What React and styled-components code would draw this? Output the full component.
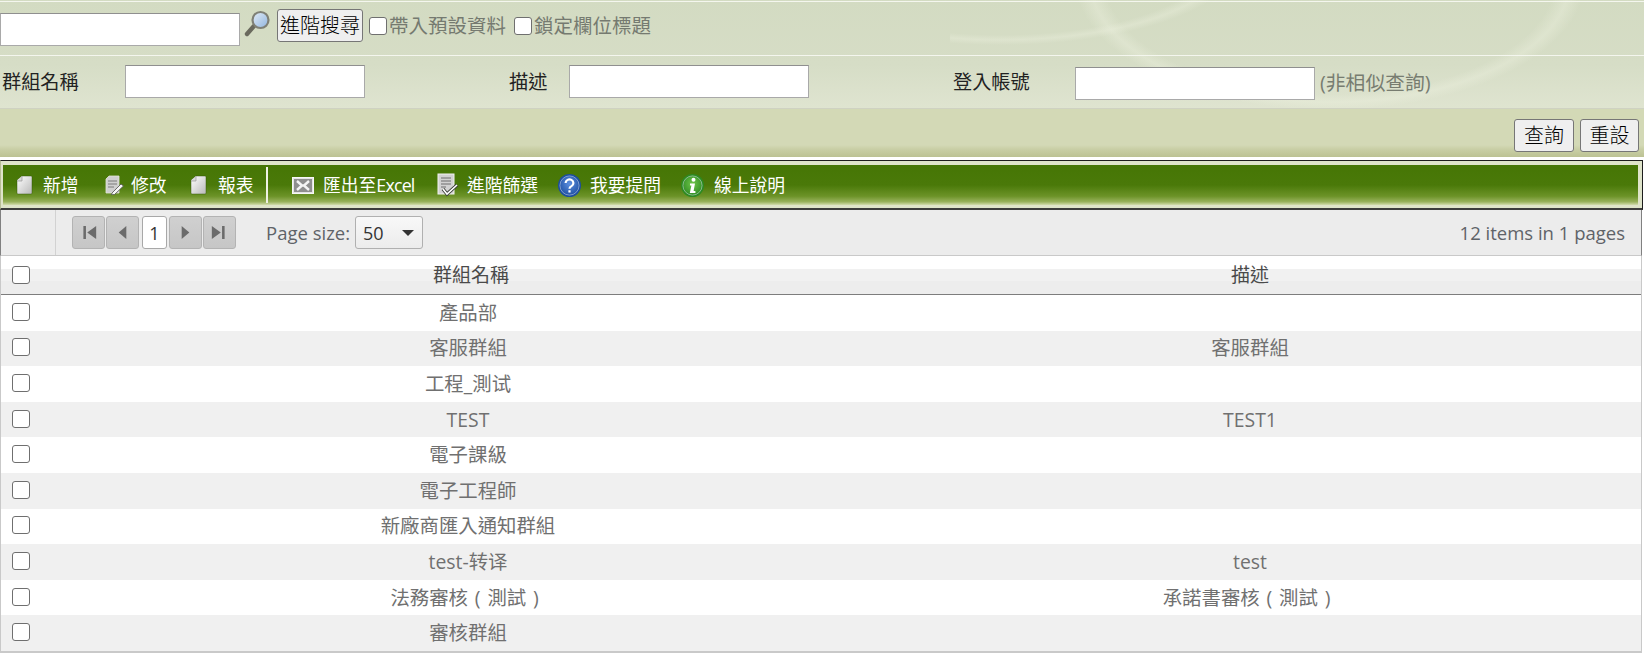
import React from "react";
import styled, { createGlobalStyle } from "styled-components";

const CJK = `"Open Sans", "Noto Sans CJK TC", sans-serif`;

const Global = createGlobalStyle`
  html, body { margin: 0; padding: 0; height: 653px; overflow: hidden; background: #fff; }
  body { font-family: ${CJK}; }
  * { box-sizing: border-box; }
`;

const Page = styled.div`
  width: 1644px;
  height: 653px;
  overflow: hidden;
`;

const SearchPanel = styled.div`
  height: 110px;
  padding-top: 1px;
  background-color: #d5dcc4;
  background-image:
    radial-gradient(ellipse 240px 85px at 50px -40px, transparent 88%, rgba(236,240,222,.38) 94%, transparent 100%),
    radial-gradient(ellipse 255px 130px at 1330px -20px, transparent 88%, rgba(236,240,222,.4) 94%, transparent 100%),
    linear-gradient(180deg, #d3dbc2 0%, #d6ddc6 60%, #dfe4d0 100%);
  background-size: 400px 110px, 100% 100%, 100% 100%;
  background-position: 950px 0, 0 0, 0 0;
  background-repeat: no-repeat;
  border-bottom: 2px solid #cfd2c2;
`;

const SearchRow = styled.div`
  height: 54px;
  border-top: 1px solid #f4f6ee;
  display: flex;
  align-items: flex-start;
`;

const FilterRow = styled.div`
  height: 53px;
  border-top: 1px solid #f4f6ee;
  display: flex;
  align-items: center;
  padding-bottom: 1px;
`;

const TextInput = styled.input`
  width: ${(p) => p.$w || 240}px;
  height: 33px;
  padding: 0;
  border: 1px solid #a9a9a9;
  border-top-color: #8f8f8f;
  background: #fff;
  margin-top: ${(p) => p.$top || 0}px;
  flex: none;
`;

const QuickInput = styled(TextInput)`
  margin-top: 11px;
`;

const SearchIcon = styled.svg`
  width: 27px;
  height: 27px;
  margin: 8px 6px 0 4px;
  flex: none;
`;

const NativeButton = styled.button`
  height: 33px;
  width: ${(p) => p.$w}px;
  padding: 0;
  font: 300 20px/31px ${CJK};
  color: #000;
  background: #efefef;
  border: 1px solid #767676;
  border-radius: 3px;
`;

const AdvancedButton = styled(NativeButton)`
  margin-top: 7px;
`;

const CheckLabel = styled.label`
  display: flex;
  align-items: center;
  margin: 11px ${(p) => p.$mr}px 0 ${(p) => p.$ml}px;
  font-size: 19.5px;
  line-height: 26px;
  color: #757a70;
`;

const Check = styled.input.attrs({ type: "checkbox" })`
  appearance: none;
  width: 18px;
  height: 18px;
  margin: 0;
  flex: none;
  background: #fff;
  border: 1.5px solid #6f6f6f;
  border-radius: 3px;
`;

const TopCheck = styled(Check)`
  margin-right: 2px;
`;

const FieldLabel = styled.span`
  flex: none;
  width: ${(p) => p.$w}px;
  margin-left: ${(p) => p.$ml}px;
  font-size: 19.2px;
  line-height: 26px;
  color: #222;
`;

const Hint = styled.span`
  margin-left: 5px;
  font-size: 19.8px;
  color: #777c70;
`;

const ActionRow = styled.div`
  height: 48px;
  margin-top: -1px;
  padding: 10px 5px 0 0;
  display: flex;
  justify-content: flex-end;
  gap: 6px;
  background: linear-gradient(180deg, #d3d9b6 0, #d3d9b6 36px, #c9cfa6 40px, #bcc293 48px);
`;

const ToolbarFrame = styled.div`
  margin: 3px 1px 0 0;
  height: 50px;
  padding: 4px 4px 3px 2px;
  background: #dfe4ca;
  border: 1px solid #1d1d1d;
  border-left-color: #b7bd96;
  border-bottom: 2px solid #3d3d3d;
`;

const Toolbar = styled.div`
  height: 40px;
  display: flex;
  align-items: center;
  background: linear-gradient(180deg, #467605 0, #4a7909 50%, #6c9328 78%, #98b15c 92%, #d3dcae 100%);
`;

const ToolItem = styled.div`
  display: flex;
  align-items: center;
  flex: none;
  width: ${(p) => p.$w}px;
  padding-left: ${(p) => p.$pl || 0}px;
  font-size: 17.8px;
  line-height: 24px;
  color: #fff;
  white-space: nowrap;
`;

const ToolIcon = styled.svg`
  flex: none;
  width: ${(p) => p.$s}px;
  height: ${(p) => p.$h || p.$s}px;
  margin-right: ${(p) => p.$mr}px;
`;

const ToolDivider = styled.div`
  flex: none;
  width: 2px;
  height: 36px;
  background: #eef1e4;
  margin: 0 24px 0 13px;
`;

const ExcelWord = styled.span`
  letter-spacing: -0.8px;
`;

const Pager = styled.div`
  height: 46px;
  margin-right: 2px;
  display: flex;
  align-items: stretch;
  background: #ececec;
  border-left: 1px solid #808080;
  border-right: 1px solid #808080;
  border-bottom: 1px solid #c9c9c9;
  color: #5f6368;
`;

const PagerLead = styled.div`
  flex: none;
  width: 55px;
  border-right: 1px solid #d2d2d2;
`;

const PagerBody = styled.div`
  flex: 1;
  display: flex;
  align-items: center;
  padding: 0 16px 0 16px;
`;

const PageBtn = styled.div`
  flex: none;
  width: 33px;
  height: 33px;
  margin-right: 1px;
  display: flex;
  align-items: center;
  justify-content: center;
  background: linear-gradient(180deg, #d0d0d0, #c6c6c6);
  border: 1px solid #b3b3b3;
  border-radius: 3px;
`;

const PageCurrent = styled.div`
  flex: none;
  width: 25px;
  height: 33px;
  margin: 0 2px 0 2px;
  display: flex;
  align-items: center;
  justify-content: center;
  background: #fff;
  border: 1px solid #a8a8a8;
  border-radius: 3px;
  font-size: 18px;
  color: #333;
`;

const SizeLabel = styled.span`
  margin-left: 29px;
  font-size: 18.5px;
`;

const SizeSelect = styled.div`
  width: 68px;
  height: 33px;
  margin-left: 5px;
  padding: 0 7px;
  display: flex;
  align-items: center;
  justify-content: space-between;
  background: linear-gradient(180deg, #f8f8f8, #ececec);
  border: 1px solid #b0b0b0;
  border-radius: 3px;
  font-size: 18px;
  color: #333;
`;

const Caret = styled.i`
  width: 0;
  height: 0;
  border-left: 6px solid transparent;
  border-right: 6px solid transparent;
  border-top: 6px solid #333;
  margin-right: 1px;
`;

const Total = styled.span`
  margin-left: auto;
  font-size: 18.5px;
`;

const Grid = styled.div`
  margin-right: 2px;
  border-left: 1px solid #c9c9c9;
  border-right: 1px solid #c9c9c9;
  border-bottom: 2px solid #c9c9c9;
`;

const HeaderRow = styled.div`
  height: 39px;
  display: grid;
  grid-template-columns: 82px 776px 1fr;
  align-items: center;
  background: linear-gradient(180deg, #fff 0, #fff 13px, #f1f1f1 13px, #f1f1f1 25px, #ededed 25px, #ededed 100%);
  border-bottom: 1px solid #7d7d7d;
  color: #4a4a4a;
  font-size: 19px;
`;

const DataRow = styled.div`
  height: 35.6px;
  display: grid;
  grid-template-columns: 76px 782px 1fr;
  align-items: center;
  background: ${(p) => (p.$alt ? "#f0f0f0" : "#fff")};
  color: #707070;
  font-size: 19.4px;
`;

const CheckCell = styled.div`
  display: flex;
  padding: 0 0 ${(p) => (p.$head ? 0 : 2)}px 11px;
`;

const Cell = styled.div`
  text-align: center;
  line-height: 26px;
`;

const Paren = styled.span`
  display: inline-block;
  width: 1em;
  text-align: center;
`;

const DocIcon = ({ mr }) => (
  <ToolIcon $s={17} $h={20} $mr={mr} viewBox="0 0 17 20">
    <defs>
      <linearGradient id="doc" x1="0" y1="0" x2="1" y2="1">
        <stop offset="0" stopColor="#ffffff" />
        <stop offset="1" stopColor="#b9b9b9" />
      </linearGradient>
    </defs>
    <path d="M1 5 L6 1 H15 a1 1 0 0 1 1 1 V18 a1 1 0 0 1 -1 1 H2 a1 1 0 0 1 -1 -1 Z" fill="url(#doc)" stroke="#2f5204" strokeOpacity=".45" />
    <path d="M1 6 H6 V1" fill="#d8d8d8" stroke="#9a9a9a" strokeWidth=".7" />
  </ToolIcon>
);

const EditIcon = () => (
  <ToolIcon $s={19} $h={20} $mr={7} viewBox="0 0 19 20">
    <path d="M1 4 L4 1 H14 V18 H1 Z" fill="#cfcfcf" stroke="#e2e6d8" strokeWidth=".8" />
    <path d="M3 6 H12 M3 9 H12 M3 12 H9" stroke="#7d7d7d" strokeWidth="1.2" />
    <path d="M7 18 L16 9 L18.5 11 L9.5 19.5 L6.5 19.8 Z" fill="#f6f6f6" stroke="#4c4c4c" strokeWidth=".8" />
  </ToolIcon>
);

const ExcelIcon = () => (
  <ToolIcon $s={22} $h={17} $mr={9} viewBox="0 0 22 17">
    <rect x=".5" y=".5" width="21" height="16" fill="#e4e4e4" stroke="#f7f7f7" />
    <rect x="2" y="2" width="18" height="13" fill="#8f8f8f" />
    <path d="M5 4 L10 8.5 L5 13 M17 4 L12 8.5 L17 13 M10 8.5 H13" stroke="#f4f4f4" strokeWidth="2.4" fill="none" />
  </ToolIcon>
);

const FilterIcon = () => (
  <ToolIcon $s={22} $h={24} $mr={8} viewBox="0 0 22 24">
    <rect x="1" y="1" width="16" height="20" fill="#d2d2d2" stroke="#f1f1f1" />
    <path d="M4 5 H14 M4 8 H14 M4 11 H14 M4 14 H9" stroke="#6d6d6d" strokeWidth="1.2" />
    <path d="M6 16 L10 21 L20 12" fill="none" stroke="#3a3f38" strokeWidth="3.4" />
    <path d="M6 16 L10 21 L20 12" fill="none" stroke="#ffffff" strokeWidth="1.6" />
  </ToolIcon>
);

const RoundIcon = ({ id, light, dark, glyph, mr }) => (
  <ToolIcon $s={23} $mr={mr} viewBox="0 0 23 23">
    <defs>
      <radialGradient id={id} cx=".5" cy=".4" r=".65">
        <stop offset="0" stopColor={light} />
        <stop offset="1" stopColor={dark} />
      </radialGradient>
    </defs>
    <circle cx="11.5" cy="11.5" r="11.5" fill={dark} />
    <circle cx="11.5" cy="11.5" r="9.6" fill={`url(#${id})`} stroke="#d6e0ef" strokeOpacity=".5" />
    {glyph}
  </ToolIcon>
);

const QuestionGlyph = (
  <path d="M7.6 9 a3.9 3.6 0 1 1 5.9 3.1 c-1.4 .8 -2 1.3 -2 2.6 M11.5 16.2 v2.3" fill="none" stroke="#fff" strokeWidth="2.2" />
);

const InfoGlyph = (
  <g fill="#fff">
    <circle cx="12.5" cy="5.8" r="2" />
    <path d="M9 9.5 H14 L12.6 17 H14.4 V19 H8.8 L10.4 11.5 H9 Z" />
  </g>
);

const PagerGlyph = ({ kind }) => {
  const d = {
    first: "M5 4 H7 V14 H5 Z M15 4 V14 L8 9 Z",
    prev: "M12 4 V14 L6 9 Z",
    next: "M6 4 V14 L12 9 Z",
    last: "M11 4 H13 V14 H11 Z M3 4 V14 L10 9 Z",
  }[kind];
  return (
    <svg width="23" height="23" viewBox="0 0 18 18">
      <path d={d} fill="#6b6b6b" />
    </svg>
  );
};

const rows = [
  ["產品部", ""],
  ["客服群組", "客服群組"],
  ["工程_測试", ""],
  ["TEST", "TEST1"],
  ["電子課級", ""],
  ["電子工程師", ""],
  ["新廠商匯入通知群組", ""],
  ["test-转译", "test"],
  [<>法務審核<Paren>(</Paren>測試<Paren>)</Paren></>, <>承諾書審核<Paren>(</Paren>測試<Paren>)</Paren></>],
  ["審核群組", ""],
];

export default function App() {
  return (
    <Page>
      <Global />
      <SearchPanel>
        <SearchRow>
          <QuickInput />
          <SearchIcon viewBox="0 0 27 27">
            <defs>
              <linearGradient id="lens" x1="0" y1="0" x2="1" y2="1">
                <stop offset="0" stopColor="#e4edf7" />
                <stop offset="1" stopColor="#8fb4de" />
              </linearGradient>
            </defs>
            <path d="M3 24 L10 16" stroke="#6a6a5e" strokeWidth="4.4" strokeLinecap="round" />
            <circle cx="16.5" cy="10" r="8" fill="url(#lens)" stroke="#7f8076" strokeWidth="2.2" />
          </SearchIcon>
          <AdvancedButton $w={86}>進階搜尋</AdvancedButton>
          <CheckLabel $ml={6} $mr={8}>
            <TopCheck />
            帶入預設資料
          </CheckLabel>
          <CheckLabel $ml={0} $mr={0}>
            <TopCheck />
            鎖定欄位標題
          </CheckLabel>
        </SearchRow>
        <FilterRow>
          <FieldLabel $w={123} $ml={2}>群組名稱</FieldLabel>
          <TextInput />
          <FieldLabel $w={60} $ml={144}>描述</FieldLabel>
          <TextInput />
          <FieldLabel $w={122} $ml={144}>登入帳號</FieldLabel>
          <TextInput $top={4} />
          <Hint>(非相似查詢)</Hint>
        </FilterRow>
      </SearchPanel>
      <ActionRow>
        <NativeButton $w={60}>查詢</NativeButton>
        <NativeButton $w={59}>重設</NativeButton>
      </ActionRow>
      <ToolbarFrame>
        <Toolbar>
          <ToolItem $pl={13} $w={102}><DocIcon mr={10} />新增</ToolItem>
          <ToolItem $w={85}><EditIcon />修改</ToolItem>
          <ToolItem $w={63}><DocIcon mr={11} />報表</ToolItem>
          <ToolDivider />
          <ToolItem $w={145}><ExcelIcon />匯出至<ExcelWord>Excel</ExcelWord></ToolItem>
          <ToolItem $w={121}><FilterIcon />進階篩選</ToolItem>
          <ToolItem $w={123}>
            <RoundIcon id="q" light="#5d8fe0" dark="#1d4ea0" glyph={QuestionGlyph} mr={9} />我要提問
          </ToolItem>
          <ToolItem $w={110}>
            <RoundIcon id="i" light="#6fc54a" dark="#2d8a22" glyph={InfoGlyph} mr={10} />線上說明
          </ToolItem>
        </Toolbar>
      </ToolbarFrame>
      <Pager>
        <PagerLead />
        <PagerBody>
          <PageBtn><PagerGlyph kind="first" /></PageBtn>
          <PageBtn><PagerGlyph kind="prev" /></PageBtn>
          <PageCurrent>1</PageCurrent>
          <PageBtn><PagerGlyph kind="next" /></PageBtn>
          <PageBtn><PagerGlyph kind="last" /></PageBtn>
          <SizeLabel>Page size:</SizeLabel>
          <SizeSelect>50<Caret /></SizeSelect>
          <Total>12 items in 1 pages</Total>
        </PagerBody>
      </Pager>
      <Grid>
        <HeaderRow>
          <CheckCell $head><Check /></CheckCell>
          <Cell>群組名稱</Cell>
          <Cell>描述</Cell>
        </HeaderRow>
        {rows.map(([name, desc], i) => (
          <DataRow key={i} $alt={i % 2 === 1}>
            <CheckCell><Check /></CheckCell>
            <Cell>{name}</Cell>
            <Cell>{desc}</Cell>
          </DataRow>
        ))}
      </Grid>
    </Page>
  );
}
